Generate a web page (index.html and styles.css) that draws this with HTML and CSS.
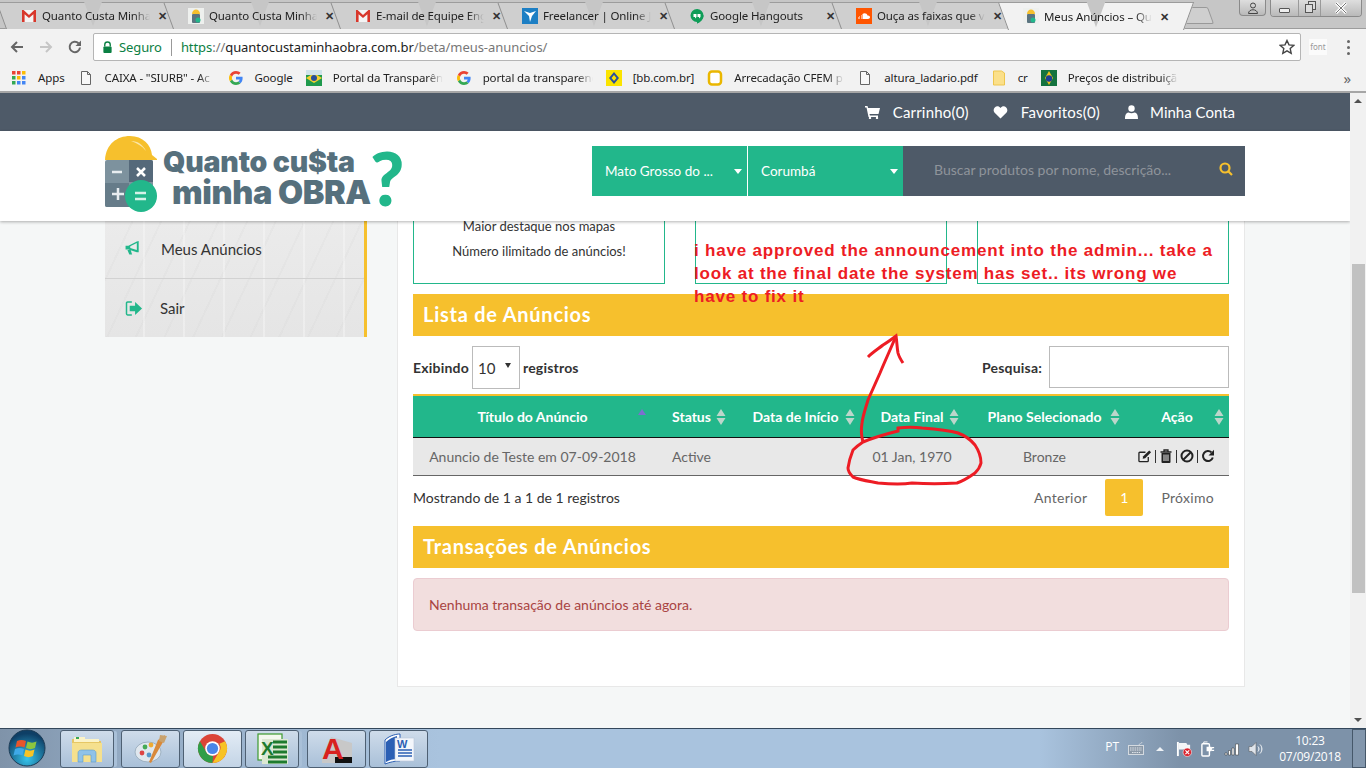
FILE: index.html
```html
<!DOCTYPE html>
<html lang="pt-BR">

<head>
    <meta charset="UTF-8">
    <title>Meus Anúncios – Quanto Custa minha Obra</title>
    <link rel="stylesheet" href="styles.css">
</head>

<body>
    <svg class="defs" width="0" height="0">
        <symbol id="i-gmail" viewBox="0 0 16 16">
            <rect x="1" y="2" width="14" height="12" fill="#f4f4f4"/>
            <path d="M1 14V2h1.6L8 7l5.4-5H15v12h-2.6V6.2L8 10 3.6 6.2V14z" fill="#d8372b"/>
        </symbol>
        <symbol id="i-qc" viewBox="0 0 16 16">
            <rect width="16" height="16" fill="#eef0ee"/>
            <path d="M4 6c0-6 8-6 8 0z" fill="#f6c02d"/>
            <rect x="4" y="6" width="8" height="9" rx="1" fill="#5b7480"/>
            <circle cx="10" cy="12" r="2.5" fill="#22b78b"/>
        </symbol>
        <symbol id="i-g" viewBox="0 0 16 16">
            <path d="M14.6 8.2c0-.5 0-1-.1-1.4H8v2.7h3.7c-.2.9-.7 1.6-1.4 2.1l2.2 1.7c1.3-1.200 2.100-3 2.100-5.100z" fill="#4285f4"/>
            <path d="M8 15c1.900 0 3.400-.6 4.500-1.700l-2.200-1.700c-.6.400-1.400.7-2.300.7-1.800 0-3.300-1.200-3.800-2.800L1.900 11.200C3 13.500 5.300 15 8 15z" fill="#34a853"/>
            <path d="M4.200 9.500C4 9 3.900 8.500 3.900 8s.1-1 .3-1.500L1.900 4.800C1.300 5.800 1 6.900 1 8s.3 2.200.9 3.200z" fill="#fbbc05"/>
            <path d="M8 3.800c1 0 1.900.3 2.600 1l2-2C11.400 1.700 9.800 1 8 1 5.300 1 3 2.500 1.900 4.800l2.300 1.700C4.700 5 6.200 3.800 8 3.800z" fill="#ea4335"/>
        </symbol>
        <symbol id="i-doc" viewBox="0 0 16 16">
            <path d="M3.500 1.500h6l3 3v10h-9zM9.500 1.500v3h3" fill="#f8f8f8" stroke="#666" stroke-width="1"/>
        </symbol>
        <symbol id="i-sort" viewBox="0 0 10 16">
            <path d="M5 0l4.500 7H.5zM5 16L.5 9h9z" fill="#bcd6cb"/>
        </symbol>
    </svg>

    <div class="browser">
        <div class="tabstrip">
            <div class="tab">
                <svg class="fav"><use href="#i-gmail"/></svg>
                <span class="tab-title">Quanto Custa Minha</span>
                <span class="tab-x">✕</span>
            </div>
            <div class="tab">
                <svg class="fav"><use href="#i-qc"/></svg>
                <span class="tab-title">Quanto Custa Minha</span>
                <span class="tab-x">✕</span>
            </div>
            <div class="tab">
                <svg class="fav"><use href="#i-gmail"/></svg>
                <span class="tab-title">E-mail de Equipe Eng</span>
                <span class="tab-x">✕</span>
            </div>
            <div class="tab">
                <svg class="fav" viewBox="0 0 16 16"><rect width="16" height="16" fill="#1d7fc4"/><path d="M2 3l6 2 6-2-4 5-2 6-1-6z" fill="#fff"/></svg>
                <span class="tab-title">Freelancer | Online J</span>
                <span class="tab-x">✕</span>
            </div>
            <div class="tab">
                <svg class="fav" viewBox="0 0 16 16"><path d="M8 1a6.500 6.500 0 0 1 6.500 6.500c0 3.500-3 6-6.500 8z" fill="#0f9d58"/><path d="M8 1a6.500 6.500 0 0 0 0 13v1.500c3-1 6.500-4 6.500-8z" fill="#0f9d58"/><path d="M4.500 6h3v3L6 10.500V9H4.500zM8.500 6h3v3L10 10.500V9H8.500z" fill="#fff"/></svg>
                <span class="tab-title">Google Hangouts</span>
                <span class="tab-x">✕</span>
            </div>
            <div class="tab">
                <svg class="fav" viewBox="0 0 16 16"><rect width="16" height="16" fill="#f50"/><path d="M2 11V9h.5v2zM3.500 11V8H4v3zM5 11V7h.5v4zM6.500 11V6c2-1.500 4.500-.5 5 1.500 1.500-.3 2.500.6 2.500 1.800s-1 1.700-2 1.700z" fill="#fff"/></svg>
                <span class="tab-title">Ouça as faixas que v</span>
                <span class="tab-x">✕</span>
            </div>
            <div class="tab tab-active">
                <svg class="fav"><use href="#i-qc"/></svg>
                <span class="tab-title">Meus Anúncios – Qu</span>
                <span class="tab-x">✕</span>
            </div>
            <div class="newtab"></div>
            <div class="winctl">
                <div class="win-btn win-user">
                    <svg width="12" height="12" viewBox="0 0 12 12"><circle cx="6" cy="3.500" r="2.500" fill="none" stroke="#444"/><path d="M1.500 11.500c0-5 9-5 9 0z" fill="none" stroke="#444"/></svg>
                </div>
                <div class="win-group">
                    <div class="win-btn win-min"><span class="min-bar"></span></div>
                    <div class="win-btn win-max"><span class="max-a"></span><span class="max-b"></span></div>
                    <div class="win-btn win-close">
                        <svg width="12" height="12" viewBox="0 0 12 12"><path d="M1 1l10 10M11 1L1 11" stroke="#fff" stroke-width="3"/><path d="M1 1l10 10M11 1L1 11" stroke="#777" stroke-width="1"/></svg>
                    </div>
                </div>
            </div>
        </div>

        <div class="toolbar">
            <svg class="nav-ic" viewBox="0 0 16 16"><path d="M14 8H3M8 3L3 8l5 5" fill="none" stroke="#666" stroke-width="2"/></svg>
            <svg class="nav-ic" viewBox="0 0 16 16"><path d="M2 8h11M8 3l5 5-5 5" fill="none" stroke="#c6c6c6" stroke-width="2"/></svg>
            <svg class="nav-ic" viewBox="0 0 16 16"><path d="M13 8.500A5.200 5.200 0 1 1 11.500 4.300" fill="none" stroke="#666" stroke-width="2"/><path d="M14 1.500V7H8.500z" fill="#666"/></svg>
            <div class="omnibox">
                <svg class="lock" viewBox="0 0 12 14"><path d="M3 6V4a3 3 0 0 1 6 0v2" fill="none" stroke="#0b8043" stroke-width="1.500"/><rect x="1.500" y="6" width="9" height="7" rx="1" fill="#0b8043"/></svg>
                <span class="secure">Seguro</span>
                <span class="omni-sep"></span>
                <span class="url"><span class="url-https">https</span><span class="url-dim">://</span>quantocustaminhaobra.com.br<span class="url-dim">/beta/meus-anuncios/</span></span>
                <svg class="star" viewBox="0 0 16 16"><path d="M8 1.500l2 4.400 4.700.5-3.500 3.200 1 4.700L8 11.900l-4.200 2.400 1-4.700L1.300 6.400 6 5.900z" fill="none" stroke="#444" stroke-width="1.400"/></svg>
            </div>
            <span class="ext-font">font</span>
            <span class="menu-dots"><i></i><i></i><i></i></span>
        </div>

        <div class="bookmarks">
            <div class="bm">
                <svg class="fav" viewBox="0 0 16 16"><g><rect x="1" y="1" width="3.500" height="3.500" fill="#ea4335"/><rect x="6" y="1" width="3.500" height="3.500" fill="#ea4335"/><rect x="11" y="1" width="3.500" height="3.500" fill="#fbbc05"/><rect x="1" y="6" width="3.500" height="3.500" fill="#34a853"/><rect x="6" y="6" width="3.500" height="3.500" fill="#fbbc05"/><rect x="11" y="6" width="3.500" height="3.500" fill="#4285f4"/><rect x="1" y="11" width="3.500" height="3.500" fill="#34a853"/><rect x="6" y="11" width="3.500" height="3.500" fill="#4285f4"/><rect x="11" y="11" width="3.500" height="3.500" fill="#4285f4"/></g></svg>
                <span>Apps</span>
            </div>
            <div class="bm">
                <svg class="fav"><use href="#i-doc"/></svg>
                <span class="bm-fade">CAIXA - "SIURB" - Ac</span>
            </div>
            <div class="bm">
                <svg class="fav"><use href="#i-g"/></svg>
                <span>Google</span>
            </div>
            <div class="bm">
                <svg class="fav" viewBox="0 0 16 16"><rect width="16" height="16" fill="#1f9a4d"/><path d="M0 8l8-5 8 5-8 5z" fill="#f6d02d"/><circle cx="8" cy="8" r="3" fill="#27509b"/><rect width="16" height="5" fill="#cfe3ea"/></svg>
                <span class="bm-fade">Portal da Transparên</span>
            </div>
            <div class="bm">
                <svg class="fav"><use href="#i-g"/></svg>
                <span class="bm-fade">portal da transparenc</span>
            </div>
            <div class="bm">
                <svg class="fav" viewBox="0 0 16 16"><rect width="16" height="16" fill="#fbe400"/><path d="M3 8l5-6 5 6-5 6zM5.500 8L8 5l2.500 3L8 11z" fill="#2a4f9e" fill-rule="evenodd"/></svg>
                <span>[bb.com.br]</span>
            </div>
            <div class="bm">
                <svg class="fav" viewBox="0 0 16 16"><rect x="2" y="1.500" width="12" height="13" rx="3" fill="#fff" stroke="#eab700" stroke-width="2.500"/></svg>
                <span class="bm-fade">Arrecadação CFEM p</span>
            </div>
            <div class="bm">
                <svg class="fav"><use href="#i-doc"/></svg>
                <span>altura_ladario.pdf</span>
            </div>
            <div class="bm">
                <svg class="fav" viewBox="0 0 16 16"><path d="M2.500 1h8l3 2v12h-11z" fill="#fbe08a" stroke="#eec64e"/></svg>
                <span>cr</span>
            </div>
            <div class="bm">
                <svg class="fav" viewBox="0 0 16 16"><rect width="16" height="16" fill="#14733f"/><path d="M8 1l4 7-4 7-4-7z" fill="#f2c21a"/><circle cx="8" cy="8.500" r="3.200" fill="#1c3f94"/></svg>
                <span class="bm-fade">Preços de distribuiçã</span>
            </div>
            <span class="bm-more">»</span>
        </div>

        <div class="viewport">
            <div class="page">
                <div class="topbar">
                    <div class="wrap topbar-in">
                        <a class="top-link">
                            <svg class="top-ic" viewBox="0 0 15 14"><path d="M0 1h2.500l.6 2H15l-1.500 6H4.500l.4 1.500H13V12H3.500L1.500 2.500H0z" fill="#fff"/><circle cx="5" cy="13" r="1.200" fill="#fff"/><circle cx="12" cy="13" r="1.200" fill="#fff"/></svg>
                            Carrinho(0)
                        </a>
                        <a class="top-link">
                            <svg class="top-ic" viewBox="0 0 16 14"><path d="M8 14L1.500 7.500C-1.500 3.500 4.500-2 8 2.800 11.500-2 17.500 3.500 14.500 7.500z" fill="#fff"/></svg>
                            Favoritos(0)
                        </a>
                        <a class="top-link">
                            <svg class="top-ic top-ic-user" viewBox="0 0 13 14"><circle cx="6.500" cy="3.500" r="3.200" fill="#fff"/><path d="M0 14c0-3 .5-6 3.500-6.500 2 1 4 1 6 0 3 .5 3.500 3.500 3.500 6.500z" fill="#fff"/></svg>
                            Minha Conta
                        </a>
                    </div>
                </div>

                <header class="site-head">
                    <div class="wrap head-in">
                        <div class="logo">
                            <svg class="logo-mark" viewBox="0 0 52 76">
                                <path d="M0 24C1 8 12 0 25 0s21 9 22 19l5 4v1z" fill="#f6c02d"/>
                                <path d="M26 5c7 0 12 4 15 10-4-5-9-8-15-10z" fill="#fbe6a8"/>
                                <rect y="24" width="48" height="47" rx="2" fill="#7d929e"/>
                                <path d="M24 24h22a2 2 0 0 1 2 2v20H24z" fill="#55697a"/>
                                <path d="M0 47h24v24H2a2 2 0 0 1-2-2z" fill="#667c89"/>
                                <path d="M7 36h10M7 58h12M13 52v12" stroke="#e8edf0" stroke-width="2.500"/>
                                <path d="M32 32l8 8M40 32l-8 8" stroke="#fff" stroke-width="2.500"/>
                                <circle cx="36" cy="60" r="16" fill="#22b78b"/>
                                <path d="M30 57h11M30 63h11" stroke="#d5f2e8" stroke-width="2.500"/>
                            </svg>
                            <div class="logo-words">
                                <span class="logo-l1">Quanto cu$ta</span>
                                <span class="logo-l2">minha OBRA</span>
                            </div>
                            <span class="logo-q">?</span>
                        </div>
                        <div class="finder">
                            <div class="pick">Mato Grosso do ...<i class="caret"></i></div>
                            <div class="pick pick-b">Corumbá<i class="caret"></i></div>
                            <div class="finder-search">
                                <span>Buscar produtos por nome, descrição...</span>
                                <svg class="finder-ic" viewBox="0 0 14 14"><circle cx="6" cy="6" r="4.500" fill="none" stroke="#f6c02d" stroke-width="2.200"/><path d="M9.500 9.500L13 13" stroke="#f6c02d" stroke-width="2.200"/></svg>
                            </div>
                        </div>
                    </div>
                </header>

                <div class="wrap main">
                    <aside class="side">
                        <a class="side-item side-meus">
                            <svg class="side-ic" viewBox="0 0 18 16"><path d="M0 5h3l9-4.500L14 0v12h-2L3 9v0H0z" fill="#22b78b"/><path d="M5 5.500l7-3.500v7.500L5 7.500z" fill="#eaeaea"/><path d="M2 9.500h3.500l1.500 5H4z" fill="#22b78b"/></svg>
                            <span>Meus Anúncios</span>
                        </a>
                        <a class="side-item">
                            <svg class="side-ic" viewBox="0 0 16 14"><path d="M6 1H2a1 1 0 0 0-1 1v10a1 1 0 0 0 1 1h4" fill="none" stroke="#22b78b" stroke-width="1.400"/><path d="M4 4.500h5V1l6.500 6L9 13V9.500H4z" fill="#22b78b"/></svg>
                            <span class="side-sair">Sair</span>
                        </a>
                    </aside>

                    <section class="panel">
                        <div class="plans">
                            <div class="plan">
                                <p>Maior destaque nos mapas</p>
                                <p>Número ilimitado de anúncios!</p>
                            </div>
                            <div class="plan"></div>
                            <div class="plan"></div>
                        </div>

                        <h2 class="band band-first">Lista de Anúncios</h2>

                        <div class="dt-controls">
                            <label class="dt-len">Exibindo <span class="dt-select">10<i class="dt-caret"></i></span> registros</label>
                            <label class="dt-find">Pesquisa: <span class="dt-input"></span></label>
                        </div>

                        <table class="grid">
                            <colgroup>
                                <col class="c-title"><col class="c-status"><col class="c-start"><col class="c-end"><col class="c-plan"><col class="c-act">
                            </colgroup>
                            <thead>
                                <tr>
                                    <th>Título do Anúncio<i class="sort-up"></i></th>
                                    <th>Status<svg class="sort"><use href="#i-sort"/></svg></th>
                                    <th>Data de Início<svg class="sort"><use href="#i-sort"/></svg></th>
                                    <th>Data Final<svg class="sort"><use href="#i-sort"/></svg></th>
                                    <th>Plano Selecionado<svg class="sort"><use href="#i-sort"/></svg></th>
                                    <th>Ação<svg class="sort"><use href="#i-sort"/></svg></th>
                                </tr>
                            </thead>
                            <tbody>
                                <tr>
                                    <td>Anuncio de Teste em 07-09-2018</td>
                                    <td>Active</td>
                                    <td></td>
                                    <td>01 Jan, 1970</td>
                                    <td>Bronze</td>
                                    <td class="acts">
                                        <svg class="act" viewBox="0 0 15 14"><path d="M11 8v4a1 1 0 0 1-1 1H2a1 1 0 0 1-1-1V4a1 1 0 0 1 1-1h6" fill="none" stroke="#222" stroke-width="1.400"/><path d="M5 10l.6-2.800L12 1l2 2-6.300 6.300z" fill="#222"/></svg>
                                        <span class="act-sep"></span>
                                        <svg class="act" viewBox="0 0 13 14"><path d="M1 3h11M4.500 3V1h4v2" fill="none" stroke="#222" stroke-width="1.300"/><path d="M2 4h9v9a1 1 0 0 1-1 1H3a1 1 0 0 1-1-1z" fill="#222"/><path d="M4.500 5.500V12M6.500 5.500V12M8.500 5.500V12" stroke="#e8e8e8"/></svg>
                                        <span class="act-sep"></span>
                                        <svg class="act" viewBox="0 0 14 14"><circle cx="7" cy="7" r="5.500" fill="none" stroke="#222" stroke-width="2"/><path d="M3 11l8-8" stroke="#222" stroke-width="2"/></svg>
                                        <span class="act-sep"></span>
                                        <svg class="act" viewBox="0 0 14 14"><path d="M11.800 8.500A5 5 0 1 1 10.500 3.400" fill="none" stroke="#222" stroke-width="2"/><path d="M13 .8V6.500H7.500z" fill="#222"/></svg>
                                    </td>
                                </tr>
                            </tbody>
                        </table>

                        <div class="dt-foot">
                            <span>Mostrando de 1 a 1 de 1 registros</span>
                            <div class="pager">
                                <span>Anterior</span>
                                <span class="pager-on">1</span>
                                <span>Próximo</span>
                            </div>
                        </div>

                        <h2 class="band">Transações de Anúncios</h2>

                        <div class="alert">Nenhuma transação de anúncios até agora.</div>
                    </section>
                </div>
            </div>

            <div class="scrollbar">
                <i class="sb-up"></i>
                <div class="sb-track"><div class="sb-thumb"></div></div>
                <i class="sb-down"></i>
            </div>
        </div>

        <footer class="taskbar">
            <div class="orb">
                <svg viewBox="0 0 38 38" width="38" height="38">
                    <defs>
                        <radialGradient id="orbg" cx="50%" cy="80%" r="70%"><stop offset="0" stop-color="#35c4ec"/><stop offset="1" stop-color="#0e3f66"/></radialGradient>
                    </defs>
                    <circle cx="19" cy="19" r="18" fill="url(#orbg)" stroke="#1c3b55"/>
                    <path d="M9 12c3-1.500 6-1.500 9 0l-1.500 6.500c-3-1.500-6-1.500-9 0z" fill="#e8552b"/>
                    <path d="M19.500 12.500c3 1.500 6 1.500 9 0L27 19c-3 1.500-6 1.500-9 0z" fill="#8cc63f"/>
                    <path d="M7 20c3-1.500 6-1.500 9 0l-1.500 6.500c-3-1.500-6-1.500-9 0z" fill="#3fa9e8"/>
                    <path d="M17.500 20.500c3 1.500 6 1.500 9 0L25 27c-3 1.500-6 1.500-9 0z" fill="#f7c325"/>
                </svg>
            </div>
            <div class="task-btn task-explorer">
                <svg viewBox="0 0 32 30" width="32" height="30"><path d="M1 5h10l2 2h17v21H1z" fill="#e6c765"/><rect x="3" y="3" width="11" height="5" fill="#fbf3c8"/><rect x="5" y="3" width="3" height="2" fill="#3aa655"/><rect x="14" y="5" width="14" height="3" fill="#fbf3c8"/><rect x="1" y="9" width="30" height="19" fill="#f5e08e"/><path d="M7 28v-9c0-3 3-3 4-3h10c1 0 4 0 4 3v9h-5v-7h-8v7z" fill="#8fc2e8" stroke="#5f9cc8" stroke-width=".6"/></svg>
            </div>
            <div class="task-btn">
                <svg viewBox="0 0 34 32" width="34" height="32"><ellipse cx="14" cy="19" rx="13" ry="10" fill="#dfe7ee" stroke="#9fb2c2"/><circle cx="8" cy="20" r="2.400" fill="#d44"/><circle cx="11" cy="14" r="2.400" fill="#4a5"/><circle cx="17" cy="12" r="2.400" fill="#ea3"/><circle cx="15" cy="22" r="2.400" fill="#59c"/><path d="M31 2l-2 7-12 21-2-1 9-22z" fill="#d9893a"/><path d="M26 2l7 1-3 7-5-2z" fill="#c9a26d"/></svg>
            </div>
            <div class="task-btn task-hot">
                <svg viewBox="0 0 32 32" width="31" height="31"><circle cx="16" cy="16" r="15" fill="#db4437"/><path d="M16 31A15 15 0 0 1 3 8.500L10 20.500A7 7 0 0 0 16.500 23.500z" fill="#2f9e48"/><path d="M29 8.500A15 15 0 0 1 16 31l7-12a7 7 0 0 0 0-8z" fill="#f7c325"/><circle cx="16" cy="16" r="7.500" fill="#fff"/><circle cx="16" cy="16" r="5.800" fill="#4a86e8"/></svg>
            </div>
            <div class="task-btn task-stack">
                <svg viewBox="0 0 32 32" width="32" height="32"><rect x="2" y="1" width="24" height="26" fill="#f4f8ee" stroke="#3d9a2f" stroke-width="1.200"/><rect x="6" y="6" width="26" height="25" fill="#dce8d2"/><path d="M17 9h14M17 14h14M17 19h14M12 24h19M12 29h19" stroke="#1e7b2f" stroke-width="3"/><text class="glyph-x" x="5" y="22">X</text></svg>
            </div>
            <div class="task-btn">
                <svg viewBox="0 0 32 32" width="32" height="32"><path d="M10 4l21 6v20H1V25z" fill="#c8c8c8"/><rect x="14" y="24" width="17" height="6" fill="#111"/><text class="glyph-a" x="1" y="26">A</text></svg>
            </div>
            <div class="task-btn">
                <svg viewBox="0 0 32 32" width="32" height="32"><path d="M2 7C7 2 14 1 17 1v27c-5 0-10 1-15 3z" fill="#fff" stroke="#2b5fb4"/><path d="M3 9c3-3 7-5 11-6v23c-4 0-8 1-11 3z" fill="#2b5fb4"/><rect x="12" y="5" width="19" height="23" fill="#f3f6fb" stroke="#b9c7da" stroke-width=".6"/><path d="M15 17h14M15 20h14M15 23h14" stroke="#2b5fb4" stroke-width="1.600"/><text class="glyph-w" x="14" y="15">W</text></svg>
            </div>

            <div class="tray">
                <span class="tray-lang">PT</span>
                <svg class="tray-ic tray-kbd" viewBox="0 0 16 14"><path d="M11 3c0-2 3-1 3-3" fill="none" stroke="#c8d0d8"/><rect x=".5" y="3.500" width="15" height="9" fill="#8b99a8" stroke="#d4dae0"/><path d="M2 6h12M2 8h12M4 10.500h8" stroke="#dfe4ea" stroke-dasharray="1.500 .8"/></svg>
                <i class="tray-up"></i>
                <svg class="tray-ic" viewBox="0 0 17 17"><path d="M2 1v15" stroke="#fff" stroke-width="2"/><path d="M3 2h8l1 2h3v5H3z" fill="#f4f6f8"/><circle cx="12" cy="12" r="4.500" fill="#d9232d" stroke="#fff" stroke-width=".6"/><path d="M10 10l4 4M14 10l-4 4" stroke="#fff" stroke-width="1.200"/></svg>
                <svg class="tray-ic tray-gap" viewBox="0 0 15 17"><rect x="1" y="3" width="8" height="13" rx="1" fill="none" stroke="#fff" stroke-width="1.500"/><path d="M6 6h5l1 2-1 3H6z" fill="#fff"/><path d="M11 7h3M11 10h3" stroke="#fff" stroke-width="1.200"/><path d="M3 3V1h4" fill="none" stroke="#fff"/></svg>
                <svg class="tray-ic tray-gap" viewBox="0 0 16 14"><path d="M1 11h2v2H1zM4.500 8.500h2V13h-2zM8 6h2v7H8zM11.500 2h3v11h-3z" fill="#fff" stroke="#333" stroke-width=".5"/></svg>
                <svg class="tray-ic tray-gap" viewBox="0 0 16 15"><path d="M1 5h3l4-4v13l-4-4H1z" fill="#dfe4ea" stroke="#555" stroke-width=".5"/><path d="M10 5c1.300 1.500 1.300 3.500 0 5M12 3c2.500 2.500 2.500 6.500 0 9" fill="none" stroke="#fff"/></svg>
                <div class="clock">
                    <span>10:23</span>
                    <span>07/09/2018</span>
                </div>
                <div class="show-desk"></div>
            </div>
        </footer>

        <div class="note">i have approved the announcement into the admin... take a look at the final date the system has set.. its wrong we have to fix it</div>
        <svg class="scrawl" viewBox="0 0 1366 768" width="1366" height="768">
            <path d="M863 442C875 437 890 433 898 431L898 428C906 427 915 427 922 428C936 429 948 430 958 433C966 436 971 440 975 445C979 451 981 457 981 463C980 467 978 470 975 473C968 478 963 481 957 483C942 484 927 484 912 483C900 485 889 484 878 483C868 481 860 480 853 477C850 474 848 471 848 468C849 461 851 455 853 450C856 447 860 444 863 442" fill="none" stroke="#ed1c24" stroke-width="3"/>
            <path d="M863 442C861 435 861 429 862 423C863 415 866 407 868 400C872 391 876 382 880 373C885 361 891 348 896 336" fill="none" stroke="#ed1c24" stroke-width="3"/>
            <path d="M868 357C873 352 878 349 883 345C888 342 892 339 896 336C897 342 897 348 898 353C899 357 901 360 903 363" fill="none" stroke="#ed1c24" stroke-width="3"/>
        </svg>
    </div>
</body>

</html>
```

FILE: styles.css
```css
* {
    box-sizing: border-box;
}

html,
body {
    margin: 0;
    padding: 0;
    overflow: hidden;
}

body {
    font-family: "Lato", "Liberation Sans", sans-serif;
}

.defs {
    display: block;
    position: absolute;
}

.browser {
    position: relative;
    width: 1366px;
    height: 768px;
    display: flex;
    flex-direction: column;
    overflow: hidden;
    background: #fff;
}

/* browser chrome */
.tabstrip {
    height: 29px;
    flex: none;
    display: flex;
    padding: 2px 4px 0 6px;
    background: #c6c6c6;
    border-bottom: 1px solid #9c9c9c;
    font: 11.5px "Noto Sans", "Open Sans", sans-serif;
    letter-spacing: -.12px;
    color: #222;
}

.tab {
    position: relative;
    isolation: isolate;
    flex: none;
    width: 174px;
    height: 27px;
    margin-right: -7px;
    padding: 0 10px 0 15px;
    display: flex;
    align-items: center;
}

.tab::before,
.tab::after {
    content: "";
    position: absolute;
    z-index: -1;
    top: 0;
    bottom: 0;
    width: 50%;
    background: #cfcfcf;
    border-top: 1px solid #9c9c9c;
}

.tab::before {
    left: 0;
    border-left: 1px solid #8f8f8f;
    transform: skewX(20deg);
    transform-origin: left bottom;
}

.tab::after {
    right: 0;
    border-right: 1px solid #8f8f8f;
    transform: skewX(-20deg);
    transform-origin: right bottom;
}

.tab-active {
    z-index: 2;
    height: 28px;
    width: 176px;
}

.tab-active::before,
.tab-active::after {
    background: #f2f2f2;
}

.fav {
    width: 16px;
    height: 16px;
    flex: none;
}

.tab-title {
    width: 108px;
    flex: none;
    margin-left: 5px;
    white-space: nowrap;
    overflow: hidden;
    -webkit-mask-image: linear-gradient(90deg, #000 85%, transparent);
    mask-image: linear-gradient(90deg, #000 85%, transparent);
}

.tab-x {
    margin-left: 8px;
    font-size: 11px;
    font-weight: 700;
    color: #333;
}

.newtab {
    width: 29px;
    height: 17px;
    margin: 5px 0 0 5px;
    background: #cfcfcf;
    border: 1px solid #999;
    border-radius: 2px;
    transform: skewX(20deg);
}

.winctl {
    margin-left: auto;
    margin-top: -2px;
    display: flex;
    gap: 4px;
    align-items: flex-start;
}

.win-btn {
    height: 16px;
    display: flex;
    align-items: center;
    justify-content: center;
    background: linear-gradient(#dedede, #b9b9b9);
    position: relative;
}

.win-user {
    width: 27px;
    border: 1px solid #8a8a8a;
    border-top: 0;
    border-radius: 0 0 4px 4px;
}

.win-group {
    display: flex;
    border: 1px solid #8a8a8a;
    border-top: 0;
    border-radius: 0 0 4px 4px;
    overflow: hidden;
}

.win-min {
    width: 27px;
}

.min-bar {
    width: 11px;
    height: 5px;
    margin-top: 4px;
    border: 1px solid #555;
    border-radius: 1px;
    background: #eee;
}

.win-max {
    width: 23px;
    border-left: 1px solid #9a9a9a;
    border-right: 1px solid #9a9a9a;
}

.max-a,
.max-b {
    position: absolute;
    width: 8px;
    height: 9px;
    border: 1px solid #555;
    background: #ddd;
}

.max-a {
    left: 9px;
    top: 1px;
}

.max-b {
    left: 6px;
    top: 4px;
}

.win-close {
    width: 40px;
}

.toolbar {
    height: 34px;
    flex: none;
    display: flex;
    align-items: center;
    padding: 2px 0 0 9px;
    background: #f2f2f2;
}

.nav-ic {
    width: 16px;
    height: 16px;
    margin-right: 13px;
    flex: none;
}

.omnibox {
    width: 1208px;
    height: 28px;
    margin-left: -3px;
    display: flex;
    align-items: center;
    padding: 0 5px 0 8px;
    background: #fff;
    border: 1px solid #b5b5b5;
    border-radius: 2px;
    font: 13px "Noto Sans", "Open Sans", sans-serif;
    color: #222;
}

.lock {
    width: 11px;
    height: 13px;
    flex: none;
}

.secure {
    margin-left: 6px;
    letter-spacing: -.1px;
    color: #0b8043;
}

.omni-sep {
    width: 1px;
    height: 17px;
    margin: 0 9px 0 9px;
    background: #999;
}

.url {
    letter-spacing: -.06px;
}

.url-https {
    color: #0b8043;
}

.url-dim {
    color: #777;
}

.star {
    width: 16px;
    height: 16px;
    margin-left: auto;
}

.ext-font {
    width: 18px;
    margin-left: 8px;
    font: 8px "Noto Sans", sans-serif;
    color: #999;
    background: #fbfbfb;
    text-align: center;
    line-height: 16px;
}

.menu-dots {
    margin-left: 20px;
    display: flex;
    flex-direction: column;
    gap: 3px;
}

.menu-dots i {
    width: 3px;
    height: 3px;
    border-radius: 50%;
    background: #666;
}

.bookmarks {
    height: 30px;
    flex: none;
    display: flex;
    align-items: center;
    padding: 1px 15px 0 11px;
    background: #f2f2f2;
    border-bottom: 2px solid #a6a6a6;
    font: 11.5px "Noto Sans", "Open Sans", sans-serif;
    letter-spacing: -.12px;
    color: #222;
}

.bm {
    display: flex;
    align-items: center;
    gap: 11px;
    margin-right: 13px;
    white-space: nowrap;
}

.bm-fade {
    width: 110px;
    overflow: hidden;
    -webkit-mask-image: linear-gradient(90deg, #000 85%, transparent);
    mask-image: linear-gradient(90deg, #000 85%, transparent);
}

.bm-more {
    margin-left: auto;
    font-size: 15px;
    color: #666;
}

/* page */
.viewport {
    flex: 1;
    min-height: 0;
    display: flex;
}

.page {
    flex: 1;
    min-width: 0;
    overflow: hidden;
    background: #f5f7f7;
    color: #333;
}

.wrap {
    width: 1140px;
    margin: 0 auto;
}

.topbar {
    height: 38px;
    background: #4e5a68;
}

.topbar-in {
    height: 100%;
    display: flex;
    justify-content: flex-end;
    align-items: center;
    gap: 24px;
    padding-right: 10px;
}

.top-link {
    display: flex;
    align-items: center;
    font-size: 15px;
    letter-spacing: .2px;
    color: #fff;
}

.top-link:last-child {
    letter-spacing: 0;
}

.top-ic {
    width: 15px;
    height: 14px;
    margin-right: 13px;
}

.top-ic-user {
    margin-right: 11px;
}

.site-head {
    height: 90px;
    background: #fff;
    box-shadow: 0 1px 3px rgba(0, 0, 0, .3);
    position: relative;
    z-index: 1;
}

.head-in {
    height: 100%;
    display: flex;
    align-items: center;
    justify-content: space-between;
}

.logo {
    display: flex;
    align-items: flex-start;
    width: 302px;
    height: 76px;
    margin-bottom: 4px;
}

.logo-mark {
    width: 52px;
    height: 76px;
    flex: none;
}

.logo-words {
    width: 209px;
    flex: none;
    margin: 11px 0 0 6px;
    display: flex;
    flex-direction: column;
    font-family: "Inter", "Lato", sans-serif;
    font-weight: 900;
    color: #56707d;
    white-space: nowrap;
}

.logo-l1 {
    font-size: 28.5px;
    line-height: 30px;
    letter-spacing: -.2px;
}

.logo-l2 {
    margin-left: 9px;
    font-size: 32.5px;
    line-height: 32px;
    letter-spacing: -.4px;
}

.logo-q {
    margin: 10px 0 0 -2px;
    font-size: 74px;
    line-height: 64px;
    font-weight: 900;
    color: #22b78b;
}

.finder {
    display: flex;
    height: 50px;
    width: 653px;
    margin-bottom: 10px;
}

.pick {
    position: relative;
    width: 155px;
    margin-right: 1px;
    padding: 0 13px;
    display: flex;
    align-items: center;
    font-size: 13.5px;
    color: #fff;
    background: #22b78b;
}

.pick-b {
    margin-right: 0;
}

.caret {
    position: absolute;
    right: 5px;
    top: 23px;
    border: 4px solid transparent;
    border-top: 5px solid #fff;
    border-bottom: 0;
}

.finder-search {
    flex: 1;
    display: flex;
    align-items: center;
    justify-content: space-between;
    padding: 0 12px 4px 31px;
    font-size: 14px;
    color: #8f949b;
    background: #4e5a68;
}

.finder-ic {
    width: 14px;
    height: 14px;
}

.main {
    display: flex;
    align-items: flex-start;
    gap: 30px;
}

.side {
    width: 262px;
    height: 116px;
    flex: none;
    border-right: 3px solid #f6c02d;
    background:
        repeating-linear-gradient(90deg, transparent 0 38px, rgba(255, 255, 255, .3) 38px 40px),
        repeating-linear-gradient(115deg, transparent 0 24px, rgba(200, 200, 200, .12) 24px 26px),
        linear-gradient(180deg, #ebebeb, #e5e5e5);
}

.side-item {
    height: 58px;
    display: flex;
    align-items: center;
    padding-left: 20px;
    font-size: 15px;
    color: #333;
}

.side-meus {
    padding-bottom: 2px;
    border-bottom: 1px solid #d2d2d2;
}

.side-ic {
    width: 18px;
    height: 15px;
    margin-right: 18px;
    flex: none;
}

.side-sair {
    margin-left: -1px;
}

.panel {
    flex: 1;
    height: 466px;
    padding: 0 15px;
    background: #fff;
    border: 1px solid #e8e8e8;
    border-top: 0;
}

.plans {
    height: 63px;
    display: flex;
    gap: 30px;
}

.plan {
    flex: 1;
    border: 1px solid #22b78b;
    border-top: 0;
    text-align: center;
    font-size: 13px;
    color: #333;
}

.plan p {
    margin: 0;
    line-height: 25px;
}

.plan p:first-child {
    margin-top: -7px;
}

.band {
    height: 42px;
    margin: 0;
    padding: 0 10px 2px;
    display: flex;
    align-items: center;
    font-size: 20px;
    font-weight: 700;
    letter-spacing: .75px;
    color: #fff;
    background: #f6c02d;
}

.band-first {
    margin-top: 10px;
}

.dt-controls {
    height: 58px;
    display: flex;
    align-items: flex-start;
    justify-content: space-between;
    padding-top: 10px;
    font-size: 14px;
    font-weight: 700;
    letter-spacing: .2px;
}

.dt-len,
.dt-find {
    display: flex;
    align-items: center;
    gap: 3px;
}

.dt-select {
    position: relative;
    width: 48px;
    height: 43px;
    padding-left: 5px;
    display: flex;
    align-items: center;
    font-size: 15px;
    font-weight: 400;
    border: 1px solid #bbb;
}

.dt-caret {
    position: absolute;
    right: 8px;
    top: 16px;
    border: 3.5px solid transparent;
    border-top: 5px solid #333;
    border-bottom: 0;
}

.dt-find {
    gap: 7px;
}

.dt-input {
    width: 180px;
    height: 42px;
    border: 1px solid #bbb;
}

.grid {
    width: 816px;
    table-layout: fixed;
    border-collapse: collapse;
    font-size: 14px;
}

.c-title { width: 239px; }
.c-status { width: 79px; }
.c-start { width: 129px; }
.c-end { width: 104px; }
.c-plan { width: 161px; }
.c-act { width: 104px; }

.grid th {
    position: relative;
    height: 42px;
    padding: 0;
    font-weight: 700;
    color: #fff;
    background: #22b78b;
    border-top: 2px solid #f6c02d;
    border-bottom: 1px solid #111;
}

.grid td {
    height: 38px;
    padding: 0;
    text-align: center;
    color: #666;
    background: #e8e8e8;
    border-bottom: 1px solid #666;
}

.sort {
    position: absolute;
    right: 5px;
    top: 13px;
    width: 10px;
    height: 16px;
}

.sort-up {
    position: absolute;
    right: 6px;
    top: 13px;
    border: 4px solid transparent;
    border-bottom: 6px solid #7d6fd0;
    border-top: 0;
}

.grid .acts {
    padding-right: 14px;
    text-align: right;
    white-space: nowrap;
    font-size: 0;
}

.act {
    width: 14px;
    height: 14px;
    vertical-align: middle;
}

.act-sep {
    display: inline-block;
    width: 1px;
    height: 13px;
    margin: 0 3px;
    background: #333;
    vertical-align: middle;
}

.dt-foot {
    height: 50px;
    padding: 3px 0 10px;
    display: flex;
    align-items: center;
    justify-content: space-between;
    font-size: 14px;
}

.pager {
    display: flex;
    align-items: center;
    gap: 18px;
    padding-right: 15px;
    letter-spacing: .3px;
    color: #666;
}

.pager-on {
    width: 38px;
    height: 37px;
    line-height: 37px;
    text-align: center;
    color: #fff;
    background: #f6c02d;
    border-radius: 2px;
}

.alert {
    height: 53px;
    margin-top: 10px;
    padding: 0 15px;
    display: flex;
    align-items: center;
    font-size: 14px;
    color: #a94442;
    background: #f2dede;
    border: 1px solid #ebccd1;
    border-radius: 4px;
}

.scrollbar {
    width: 16px;
    flex: none;
    display: flex;
    flex-direction: column;
    align-items: center;
    background: #f1f1f1;
}

.sb-up,
.sb-down {
    flex: none;
    margin: 6px 0;
    border: 4px solid transparent;
}

.sb-up {
    border-bottom: 4px solid #505050;
    border-top: 0;
}

.sb-down {
    border-top: 4px solid #505050;
    border-bottom: 0;
}

.sb-track {
    flex: 1;
    width: 100%;
    padding: 155px 1px 119px 2px;
}

.sb-thumb {
    height: 100%;
    background: #c1c1c1;
}

/* windows taskbar */
.taskbar {
    height: 40px;
    flex: none;
    display: flex;
    align-items: center;
    padding-left: 60px;
    border-top: 1px solid #33475b;
    background: linear-gradient(90deg, #7f93a9 0, #93aac3 120px, #a9c3de 440px, #a9c3de 1040px, #7d92a9 1180px, #7d92a9 100%);
}

.orb {
    position: absolute;
    left: 8px;
    bottom: 1px;
    width: 38px;
    height: 38px;
}

.task-btn {
    width: 59px;
    height: 38px;
    margin-right: 3px;
    display: flex;
    align-items: center;
    justify-content: center;
    background: linear-gradient(#cfdcea, #a9c0d8);
    border: 1px solid #4e6073;
    border-radius: 3px;
}

.task-explorer {
    width: 54px;
    margin-right: 7px;
    box-shadow: 4px 0 0 -1px #a9c0d8;
}

.task-hot {
    background: linear-gradient(#e3ecf5, #c3d4e6);
}

.task-stack {
    width: 54px;
    margin-right: 8px;
    box-shadow: 4px 0 0 -1px #a9c0d8;
}

.glyph-x {
    font: 900 19px "Liberation Sans", sans-serif;
    fill: #1e7b2f;
}

.glyph-a {
    font: 900 30px "Liberation Sans", sans-serif;
    fill: #d8201f;
}

.glyph-w {
    font: 700 11px "Liberation Sans", sans-serif;
    fill: #2b5fb4;
}

.tray {
    margin-left: auto;
    height: 100%;
    display: flex;
    align-items: center;
    font: 12px "Open Sans", "Noto Sans", sans-serif;
    color: #fff;
}

.tray-lang {
    margin-bottom: 4px;
}

.tray-ic {
    width: 16px;
    height: 16px;
    flex: none;
}

.tray-kbd {
    margin-left: 9px;
}

.tray-up {
    margin: 0 12px;
    border: 4px solid transparent;
    border-bottom: 4px solid #eef2f6;
    border-top: 0;
}

.tray-gap {
    margin-left: 8px;
}

.clock {
    width: 70px;
    margin-left: 11px;
    display: flex;
    flex-direction: column;
    align-items: center;
    line-height: 16px;
    letter-spacing: -.2px;
}

.show-desk {
    width: 14px;
    height: 100%;
    margin-left: 7px;
    border: 1px solid #46586a;
    background: #8397ad;
}

/* what was written on top of the screenshot */
.note {
    position: absolute;
    left: 694px;
    top: 239px;
    width: 526px;
    font: 700 17px/23px "Liberation Sans", sans-serif;
    letter-spacing: .8px;
    color: #ed1c24;
}

.scrawl {
    position: absolute;
    left: 0;
    top: 0;
    pointer-events: none;
}
```
